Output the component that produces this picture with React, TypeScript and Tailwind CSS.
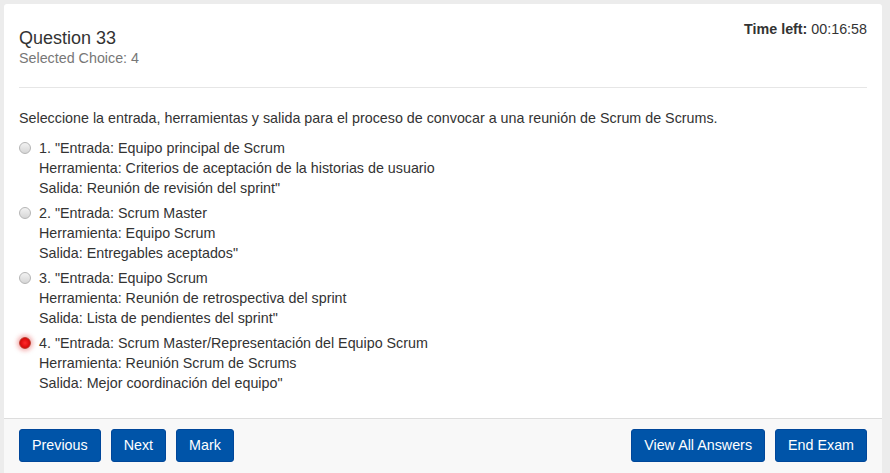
const options = [
  {
    n: 1,
    lines: ['"Entrada: Equipo principal de Scrum', 'Herramienta: Criterios de aceptación de la historias de usuario', 'Salida: Reunión de revisión del sprint"'],
  },
  {
    n: 2,
    lines: ['"Entrada: Scrum Master', 'Herramienta: Equipo Scrum', 'Salida: Entregables aceptados"'],
  },
  {
    n: 3,
    lines: ['"Entrada: Equipo Scrum', 'Herramienta: Reunión de retrospectiva del sprint', 'Salida: Lista de pendientes del sprint"'],
  },
  {
    n: 4,
    lines: ['"Entrada: Scrum Master/Representación del Equipo Scrum', 'Herramienta: Reunión Scrum de Scrums', 'Salida: Mejor coordinación del equipo"'],
  },
];

const selected = 4;

function Radio({ on }: { on: boolean }) {
  return on ? (
    <span className="mt-1 h-3 w-3 shrink-0 rounded-full border border-[#c0392b] bg-[radial-gradient(circle,#ff2a2a_0%,#e01010_55%,#b80000_100%)] shadow-[0_0_4px_2px_rgba(220,40,40,0.35)]" />
  ) : (
    <span className="mt-1 h-3 w-3 shrink-0 rounded-full border border-[#b5b5b5] bg-[linear-gradient(#f2f2f2,#d6d6d6)]" />
  );
}

function Btn({ children }: { children: string }) {
  return (
    <button className="h-[33px] rounded-[3px] border border-[#00479a] bg-[#0054a8] px-3 text-[14.3px] text-white">
      {children}
    </button>
  );
}

export default function App() {
  return (
    <div className="h-[473px] overflow-hidden bg-[#ececec] pl-1 pt-1 font-['Liberation_Sans',Arial,sans-serif] text-[14.3px] text-[#333]">
      <div className="w-[878px] overflow-hidden rounded-t-[3px] bg-white">
        <div className="px-[15px] pt-[15px]">
          {/* Header */}
          <div className="flex justify-between">
            <div className="pt-[9px]">
              <div className="text-[18px] leading-5">Question 33</div>
              <div className="leading-5 text-[#777]">Selected Choice: 4</div>
            </div>
            <div className="leading-5">
              <b>Time left:</b> 00:16:58
            </div>
          </div>
          <hr className="mt-[19px] border-[#e6e6e6]" />

          {/* Question */}
          <p className="mt-5 leading-5">
            Seleccione la entrada, herramientas y salida para el proceso de convocar a una reunión de Scrum de Scrums.
          </p>
          <div className="mt-[10px] flex flex-col gap-[5px]">
            {options.map((o) => (
              <label key={o.n} className="flex gap-2 leading-5">
                <Radio on={o.n === selected} />
                <div>
                  {o.lines.map((l, i) => (
                    <div key={i}>{i === 0 ? `${o.n}. ${l}` : l}</div>
                  ))}
                </div>
              </label>
            ))}
          </div>
        </div>

        {/* Footer */}
        <div className="mt-[25px] flex justify-between border-t border-[#dddddd] bg-[#f8f8f8] px-[15px] pb-10 pt-[10px]">
          <div className="flex gap-[10px]">
            <Btn>Previous</Btn>
            <Btn>Next</Btn>
            <Btn>Mark</Btn>
          </div>
          <div className="flex gap-[10px]">
            <Btn>View All Answers</Btn>
            <Btn>End Exam</Btn>
          </div>
        </div>
      </div>
    </div>
  );
}
